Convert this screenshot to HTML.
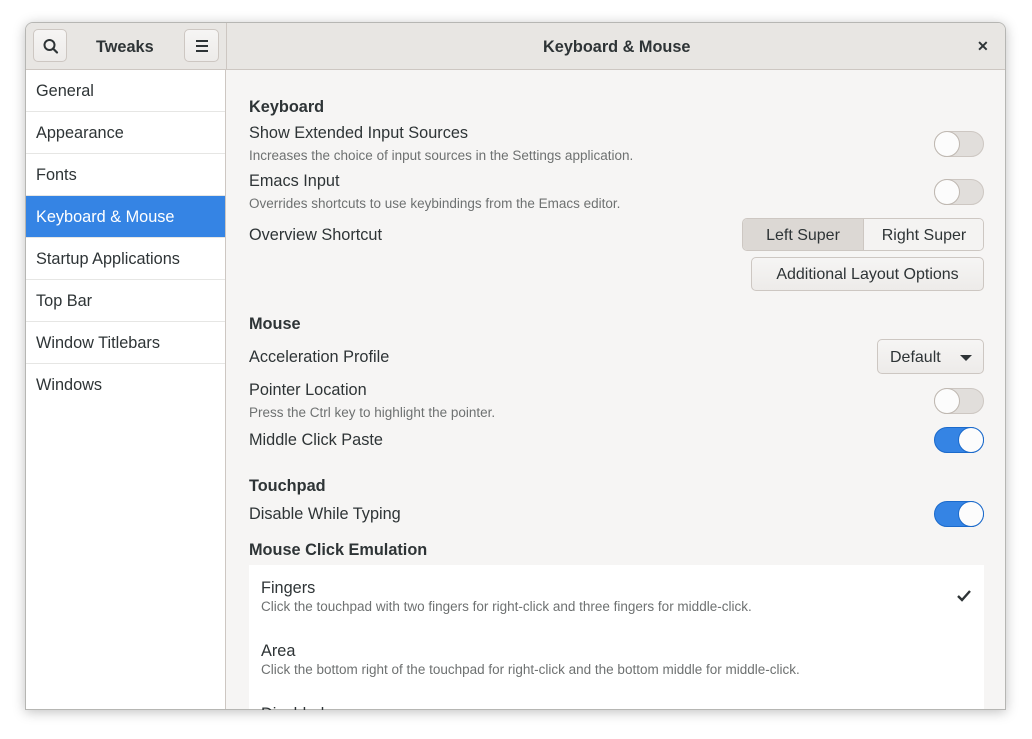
<!DOCTYPE html>
<html><head><meta charset="utf-8"><style>
*{box-sizing:border-box;margin:0;padding:0}
body{width:1032px;height:739px;background:#fff;font-family:"Liberation Sans",sans-serif;position:relative;overflow:hidden;color:#2e3436}
.win{position:absolute;left:25px;top:22px;width:981px;height:688px;border:1px solid #b6b6b3;border-radius:8px 8px 0 0;overflow:hidden;background:#f6f5f4;box-shadow:0 2px 12px rgba(0,0,0,.25)}
.hb{position:absolute;left:0;top:0;width:100%;height:47px;background:#e8e6e3;border-bottom:1px solid #cdc7c2}
.sep{position:absolute;left:200px;top:0;width:1px;height:100%;background:#cdc7c2}
.btn{position:absolute;background:linear-gradient(#f6f5f4,#edebe9);border:1px solid #cdc7c2;border-radius:5px}
.side{position:absolute;left:0;top:47px;width:200px;height:641px;background:#fff;border-right:1px solid #cdc7c2}
.side div{height:42px;line-height:43px;padding-left:10px;font-size:16.3px;border-bottom:1px solid #e6e6e4}
.side .sel{background:#3584e4;color:#fff}
.t{position:absolute;font-size:16.3px;white-space:nowrap;margin-top:1px}
.b{font-weight:bold}
.d{position:absolute;font-size:13.5px;color:#6e7171;white-space:nowrap}
.sw{position:absolute;width:50px;height:26px;border-radius:13px;background:#e1dedb;border:1px solid #cdc7c2}
.sw::after{content:"";position:absolute;left:-1px;top:-1px;width:26px;height:26px;border-radius:50%;background:#fcfcfc;border:1px solid #bfb8b1;box-sizing:border-box}
.sw.on{background:#3584e4;border-color:#1b6acb}
.sw.on::after{left:23px;border-color:#1b6acb}
</style></head><body>
<div class="win">
<div class="hb">
<div class="btn" style="left:7px;top:6px;width:34px;height:33px"><svg width="34" height="33" viewBox="0 0 34 33"><circle cx="15.5" cy="15" r="5" fill="none" stroke="#2e3436" stroke-width="2"/><path d="M19 18.5l4 4" stroke="#2e3436" stroke-width="2.2" stroke-linecap="round"/></svg></div>
<div class="t b" style="left:70px;top:14px">Tweaks</div>
<div class="btn" style="left:158px;top:6px;width:35px;height:33px"><svg width="35" height="33" viewBox="0 0 35 33"><path d="M11 11h12M11 16h12M11 21h12" stroke="#2e3436" stroke-width="2"/></svg></div>
<div class="sep"></div>
<div class="t b" style="left:517px;top:14px">Keyboard &amp; Mouse</div>
<div class="t" style="left:951px;top:14px;font-size:14px;font-weight:bold">✕</div>
</div>
<div class="side">
<div>General</div><div>Appearance</div><div>Fonts</div><div class="sel">Keyboard &amp; Mouse</div><div>Startup Applications</div><div>Top Bar</div><div>Window Titlebars</div><div style="border:none">Windows</div>
</div>
</div>
<div class="t b" style="left:249px;top:97px">Keyboard</div>
<div class="t" style="left:249px;top:123px">Show Extended Input Sources</div>
<div class="d" style="left:249px;top:148px">Increases the choice of input sources in the Settings application.</div>
<div class="sw" style="left:934px;top:131px"></div>
<div class="t" style="left:249px;top:171px">Emacs Input</div>
<div class="d" style="left:249px;top:196px">Overrides shortcuts to use keybindings from the Emacs editor.</div>
<div class="sw" style="left:934px;top:179px"></div>
<div class="t" style="left:249px;top:225px">Overview Shortcut</div>
<div style="position:absolute;left:742px;top:218px;width:242px;height:33px;border:1px solid #cdc7c2;border-radius:5px;overflow:hidden;font-size:16px">
<div style="position:absolute;left:0;top:0;width:121px;height:31px;background:#dcd8d4;border-right:1px solid #cdc7c2;text-align:center;line-height:33px">Left Super</div>
<div style="position:absolute;left:121px;top:0;width:120px;height:31px;background:#f4f3f2;text-align:center;line-height:33px">Right Super</div></div>
<div class="btn" style="left:751px;top:257px;width:233px;height:34px;text-align:center;line-height:34px;font-size:16px">Additional Layout Options</div>
<div class="t b" style="left:249px;top:314px">Mouse</div>
<div class="t" style="left:249px;top:347px">Acceleration Profile</div>
<div class="btn" style="left:877px;top:339px;width:107px;height:35px;font-size:16px;line-height:35px;padding-left:12px">Default<span style="position:absolute;right:11px;top:15px;border-left:6px solid transparent;border-right:6px solid transparent;border-top:6px solid #2e3436"></span></div>
<div class="t" style="left:249px;top:380px">Pointer Location</div>
<div class="d" style="left:249px;top:405px">Press the Ctrl key to highlight the pointer.</div>
<div class="sw" style="left:934px;top:388px"></div>
<div class="t" style="left:249px;top:430px">Middle Click Paste</div>
<div class="sw on" style="left:934px;top:427px"></div>
<div class="t b" style="left:249px;top:476px">Touchpad</div>
<div class="t" style="left:249px;top:504px">Disable While Typing</div>
<div class="sw on" style="left:934px;top:501px"></div>
<div class="t b" style="left:249px;top:540px">Mouse Click Emulation</div>
<div style="position:absolute;left:249px;top:565px;width:735px;height:144px;background:#fff"></div>
<div class="t" style="left:261px;top:578px">Fingers</div>
<div class="d" style="left:261px;top:599px">Click the touchpad with two fingers for right-click and three fingers for middle-click.</div>
<svg style="position:absolute;left:956px;top:589px" width="16" height="14" viewBox="0 0 16 14"><path d="M2 7l4 4L14 2" fill="none" stroke="#2e3436" stroke-width="2.4"/></svg>
<div class="t" style="left:261px;top:641px">Area</div>
<div class="d" style="left:261px;top:662px">Click the bottom right of the touchpad for right-click and the bottom middle for middle-click.</div>
<div style="position:absolute;left:261px;top:700px;width:100px;height:10px;overflow:hidden"><div class="t" style="left:0;top:4px">Disabled</div></div>
</body></html>
